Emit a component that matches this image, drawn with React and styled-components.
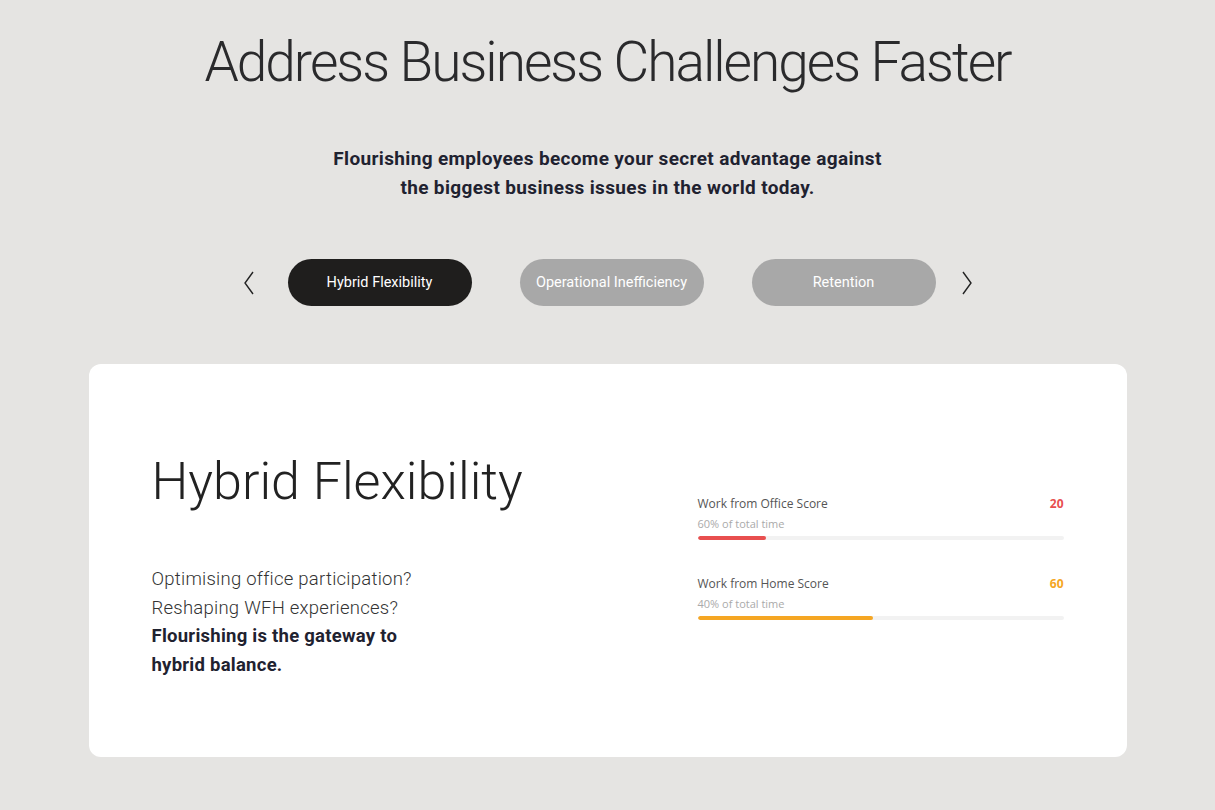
import React from 'react';
import styled, { createGlobalStyle } from 'styled-components';

const GlobalStyle = createGlobalStyle`
  body {
    margin: 0;
    background: #e5e4e2;
    font-family: Roboto, "Liberation Sans", sans-serif;
    color: #222;
  }
`;

const Page = styled.div`
  width: 100%;
  min-height: 810px;
  display: flex;
  flex-direction: column;
  align-items: center;
  padding-top: 24px;
  box-sizing: border-box;
`;

const Heading = styled.h1`
  margin: 0;
  font-size: 55px;
  font-weight: 300;
  letter-spacing: -2px;
  line-height: 76px;
  color: #2a2a2c;
`;

const Lead = styled.p`
  margin: 44px 0 0;
  font-size: 19px;
  font-weight: 700;
  letter-spacing: 0.35px;
  line-height: 29px;
  text-align: center;
  color: #1f2230;
`;

const TabRow = styled.div`
  margin-top: 57px;
  display: flex;
  align-items: center;
`;

const Tabs = styled.div`
  display: flex;
  gap: 48px;
  margin: 0 25px 0 33px;
`;

const Arrow = styled.button`
  border: 0;
  background: none;
  padding: 0;
  width: 12px;
  height: 30px;
  display: flex;
  align-items: center;
  justify-content: center;
  color: #222;
`;

const Tab = styled.button`
  width: 184px;
  height: 47px;
  border: 0;
  border-radius: 24px;
  font-family: Roboto, "Liberation Sans", sans-serif;
  font-size: 14.5px;
  font-weight: 400;
  color: #fff;
  background: ${p => (p.$active ? '#1f1e1d' : '#a8a8a8')};
`;

const Card = styled.section`
  margin-top: 58px;
  width: 1038px;
  height: 393px;
  background: #fff;
  border-radius: 12px;
  box-sizing: border-box;
  padding: 86px 63px 0;
  display: flex;
  justify-content: space-between;
`;

const Left = styled.div`
  display: flex;
  flex-direction: column;
`;

const CardTitle = styled.h2`
  margin: 0;
  font-size: 52px;
  font-weight: 300;
  line-height: 64px;
  color: #222;
`;

const Copy = styled.p`
  margin: 51px 0 0;
  font-size: 18.5px;
  letter-spacing: 0.25px;
  line-height: 28.5px;
  font-weight: 300;
  color: #333;
  width: 268px;
`;

const Strong = styled.strong`
  font-weight: 700;
  color: #1f2230;
`;

const Scores = styled.div`
  width: 366px;
  padding-top: 45px;
  display: flex;
  flex-direction: column;
  gap: 35px;
  font-family: "Open Sans", sans-serif;
`;

const Score = styled.div`
  display: flex;
  flex-direction: column;
`;

const ScoreHead = styled.div`
  display: flex;
  justify-content: space-between;
  align-items: baseline;
  font-size: 12px;
  line-height: 18px;
  color: #555;
`;

const ScoreValue = styled.span`
  font-weight: 700;
  color: ${p => p.$color};
`;

const ScoreSub = styled.div`
  margin-top: 3px;
  font-size: 11px;
  line-height: 16px;
  color: #aaa;
`;

const Track = styled.div`
  margin-top: 4px;
  height: 4px;
  border-radius: 2px;
  background: #f2f2f2;
  overflow: hidden;
`;

const Fill = styled.div`
  height: 100%;
  border-radius: 2px;
  background: ${p => p.$color};
`;

const Chevron = ({ dir }) => (
  <svg width="12" height="24" viewBox="0 0 12 24" fill="none" stroke="currentColor" strokeWidth="1.4">
    {dir === 'left' ? <path d="M10 1 L2 12 L10 23" /> : <path d="M2 1 L10 12 L2 23" />}
  </svg>
);

const scores = [
  { label: 'Work from Office Score', value: 20, sub: '60% of total time', fill: 18.6, color: '#e84f4f' },
  { label: 'Work from Home Score', value: 60, sub: '40% of total time', fill: 48, color: '#f5a623' },
];

export default function App() {
  return (
    <>
      <GlobalStyle />
      <Page>
        <Heading>Address Business Challenges Faster</Heading>
        <Lead>
          Flourishing employees become your secret advantage against
          <br />
          the biggest business issues in the world today.
        </Lead>
        <TabRow>
          <Arrow><Chevron dir="left" /></Arrow>
          <Tabs>
            <Tab $active>Hybrid Flexibility</Tab>
            <Tab>Operational Inefficiency</Tab>
            <Tab>Retention</Tab>
          </Tabs>
          <Arrow><Chevron dir="right" /></Arrow>
        </TabRow>
        <Card>
          <Left>
            <CardTitle>Hybrid Flexibility</CardTitle>
            <Copy>
              Optimising office participation?
              <br />
              Reshaping WFH experiences?
              <br />
              <Strong>Flourishing is the gateway to hybrid balance.</Strong>
            </Copy>
          </Left>
          <Scores>
            {scores.map(s => (
              <Score key={s.label}>
                <ScoreHead>
                  <span>{s.label}</span>
                  <ScoreValue $color={s.color}>{s.value}</ScoreValue>
                </ScoreHead>
                <ScoreSub>{s.sub}</ScoreSub>
                <Track>
                  <Fill $color={s.color} style={{ width: `${s.fill}%` }} />
                </Track>
              </Score>
            ))}
          </Scores>
        </Card>
      </Page>
    </>
  );
}
